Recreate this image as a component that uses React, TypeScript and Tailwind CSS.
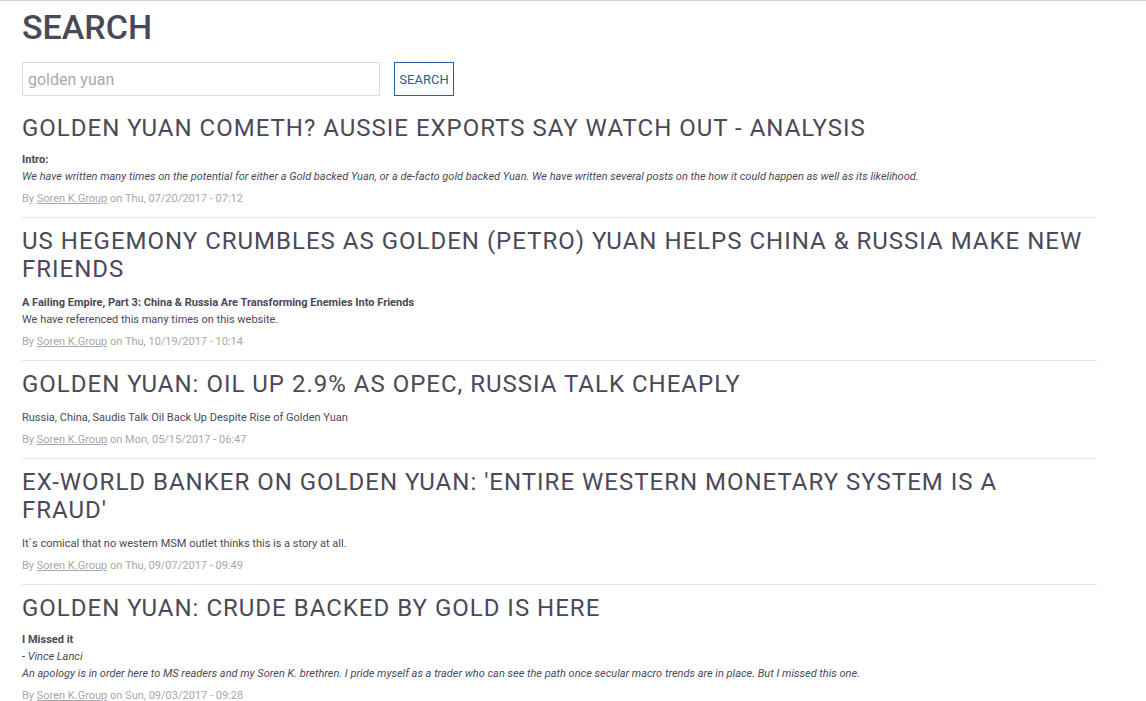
const results = [
  {
    title: ["Golden Yuan Cometh? Aussie Exports Say Watch Out - Analysis"],
    lead: "Intro:",
    lines: [
      "We have written many times on the potential for either a Gold backed Yuan, or a de-facto gold backed Yuan. We have written several posts on the how it could happen as well as its likelihood.",
    ],
    italic: true,
    tight: true,
    date: "Thu, 07/20/2017 - 07:12",
  },
  {
    title: ["US Hegemony Crumbles As Golden (Petro) Yuan Helps China & Russia Make New", "Friends"],
    lead: "A Failing Empire, Part 3: China & Russia Are Transforming Enemies Into Friends",
    lines: ["We have referenced this many times on this website."],
    italic: false,
    tight: false,
    date: "Thu, 10/19/2017 - 10:14",
  },
  {
    title: ["Golden Yuan: Oil Up 2.9% As OPEC, Russia Talk Cheaply"],
    lead: "",
    lines: ["Russia, China, Saudis Talk Oil Back Up Despite Rise of Golden Yuan"],
    italic: false,
    tight: false,
    date: "Mon, 05/15/2017 - 06:47",
  },
  {
    title: ["Ex-World Banker On Golden Yuan: 'Entire Western Monetary System Is A", "Fraud'"],
    lead: "",
    lines: ["It`s comical that no western MSM outlet thinks this is a story at all."],
    italic: false,
    tight: false,
    date: "Thu, 09/07/2017 - 09:49",
  },
  {
    title: ["Golden Yuan: Crude Backed By Gold Is Here"],
    lead: "I Missed it",
    lines: [
      "- Vince Lanci",
      "An apology is in order here to MS readers and my Soren K. brethren. I pride myself as a trader who can see the path once secular macro trends are in place. But I missed this one.",
    ],
    italic: true,
    tight: true,
    date: "Sun, 09/03/2017 - 09:28",
  },
];

export default function App() {
  return (
    <div className="min-h-[701px] bg-white border-t border-[#cfcfcf] font-['Roboto',sans-serif] text-[#4a4959]">
      <div className="w-[1075px] ml-[22px]">
        <h1 className="text-[34px] leading-[50px] font-medium pt-[1px]">SEARCH</h1>
        <div className="flex items-center gap-[14px] mt-[10px]">
          <div className="w-[358px] h-[34px] border border-[#dcdcdc] flex items-center px-[5px] pt-[2px] text-[16px] text-[#a9a9a9]">
            golden yuan
          </div>
          <button className="w-[60px] h-[34px] border border-[#2c5f8c] text-[#2c5f8c] text-[13px] pt-[2px] bg-white">
            SEARCH
          </button>
        </div>
        <div className="mt-[18px]">
          {results.map((r, i) => (
            <div key={i} className={i > 0 ? "border-t border-[#e6e6e6] pt-[9px]" : ""}>
              <h2 className="uppercase text-[24px] leading-[28px] tracking-[1px] font-normal">
                {r.title.map((t, k) => (
                  <span key={k} className="block">
                    {t}
                  </span>
                ))}
              </h2>
              <div className={`${r.tight ? "mt-[9px]" : "mt-[11px]"} text-[11px] leading-[17px]`}>
                {r.lead && <div className="font-bold">{r.lead}</div>}
                {r.lines.map((l, j) => (
                  <div key={j} className={r.italic ? "italic" : ""}>
                    {l}
                  </div>
                ))}
              </div>
              <div className="mt-[5px] mb-[10px] text-[11px] leading-[17px] text-[#a8a8a8]">
                By <span className="underline">Soren K.Group</span> on {r.date}
              </div>
            </div>
          ))}
        </div>
      </div>
    </div>
  );
}
